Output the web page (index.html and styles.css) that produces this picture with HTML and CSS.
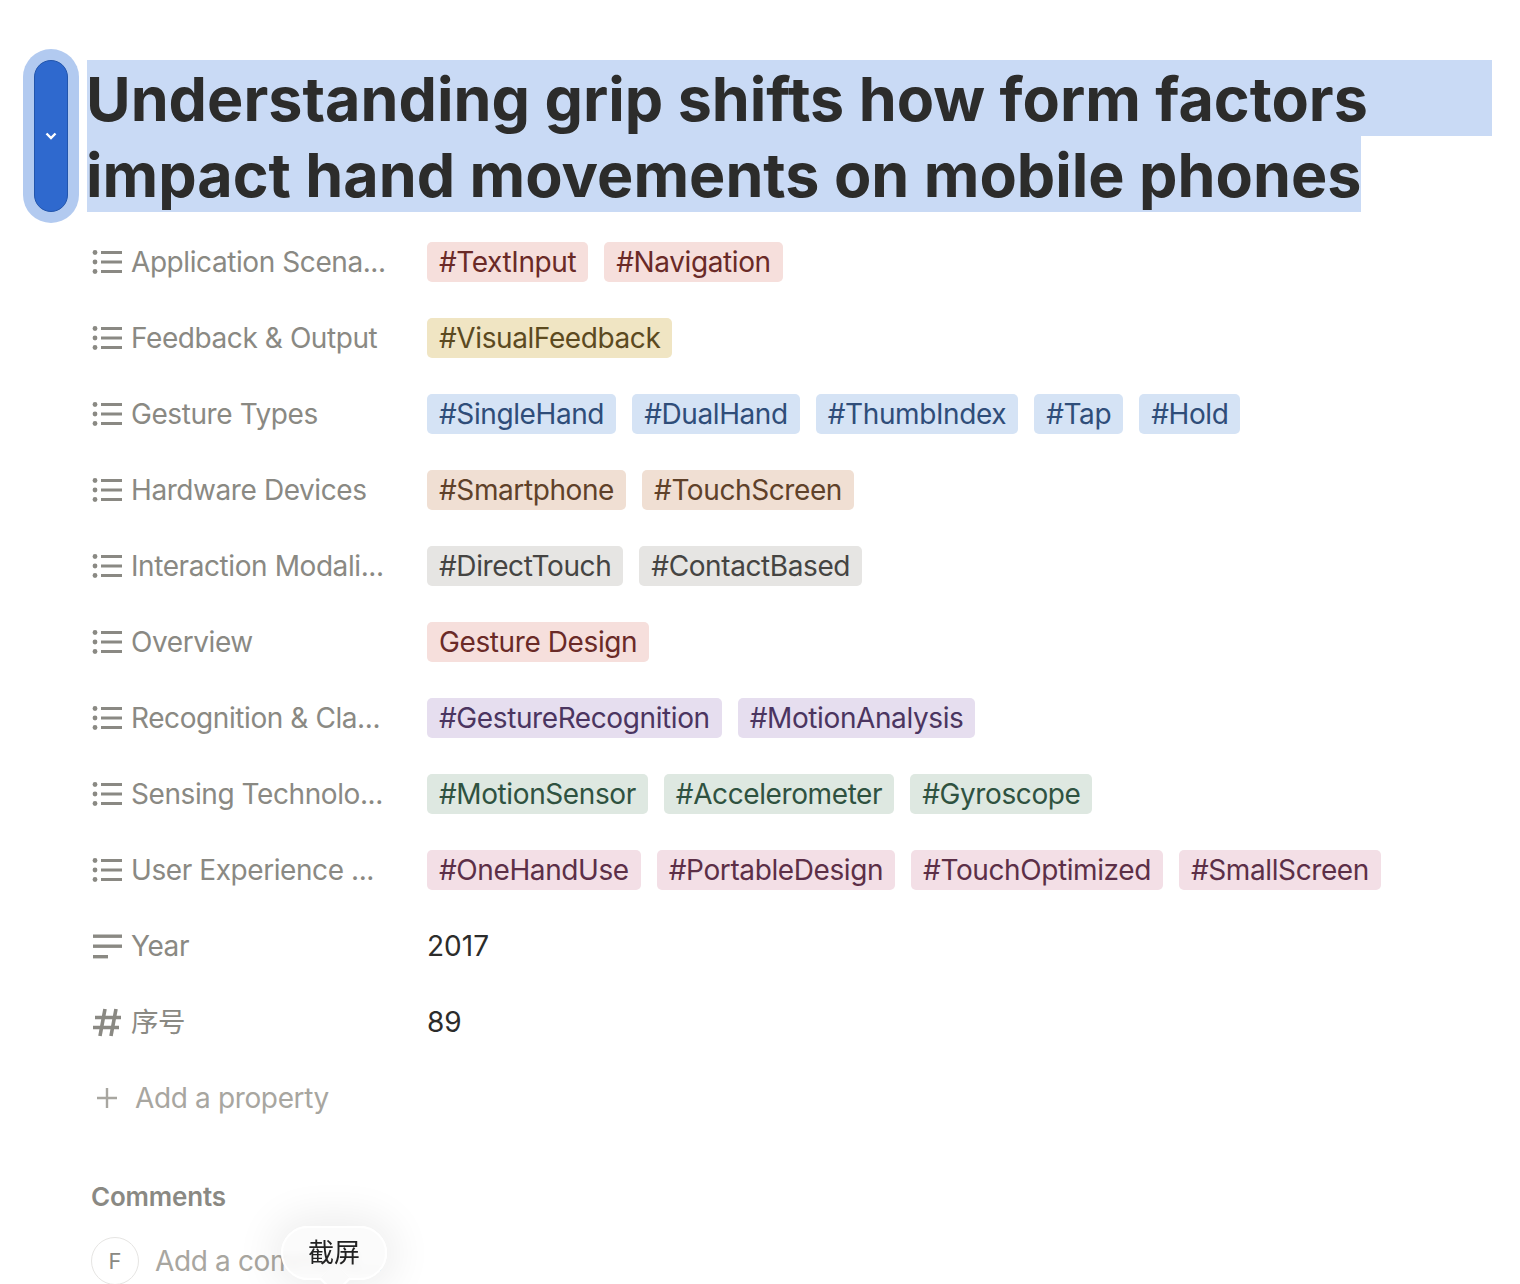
FILE: index.html
```html
<!DOCTYPE html>
<html lang="en">
<head>
  <meta charset="UTF-8">
  <title>Understanding grip shifts</title>
  <link rel="stylesheet" href="styles.css">
</head>
<body>
  <svg class="defs" width="0" height="0">
    <symbol id="list" viewBox="0 0 30 26">
      <circle cx="3" cy="3.500" r="2.400"/><circle cx="3" cy="13" r="2.400"/><circle cx="3" cy="22.500" r="2.400"/>
      <rect x="9" y="2" width="21" height="3"/><rect x="9" y="11.500" width="21" height="3"/><rect x="9" y="21" width="21" height="3"/>
    </symbol>
  </svg>

  <div class="page">
    <div class="handle">
      <div class="handle-bar">
        <svg width="12" height="8" viewBox="0 0 12 8"><path d="M1.500 1.500 6 6l4.500-4.500" fill="none" stroke="#fff" stroke-width="2.400"/></svg>
      </div>
    </div>

    <h1 class="title">
      <span class="line line-full">Understanding grip shifts how form factors</span>
      <span class="line">impact hand movements on mobile phones</span>
    </h1>

    <div class="props">
      <div class="prop">
        <div class="prop-name"><svg class="icon"><use href="#list"/></svg>Application Scena...</div>
        <div class="prop-value"><span class="tag red">#TextInput</span><span class="tag red">#Navigation</span></div>
      </div>
      <div class="prop">
        <div class="prop-name"><svg class="icon"><use href="#list"/></svg>Feedback &amp; Output</div>
        <div class="prop-value"><span class="tag yellow">#VisualFeedback</span></div>
      </div>
      <div class="prop">
        <div class="prop-name"><svg class="icon"><use href="#list"/></svg>Gesture Types</div>
        <div class="prop-value"><span class="tag blue">#SingleHand</span><span class="tag blue">#DualHand</span><span class="tag blue">#ThumbIndex</span><span class="tag blue">#Tap</span><span class="tag blue">#Hold</span></div>
      </div>
      <div class="prop">
        <div class="prop-name"><svg class="icon"><use href="#list"/></svg>Hardware Devices</div>
        <div class="prop-value"><span class="tag brown">#Smartphone</span><span class="tag brown">#TouchScreen</span></div>
      </div>
      <div class="prop">
        <div class="prop-name"><svg class="icon"><use href="#list"/></svg>Interaction Modali...</div>
        <div class="prop-value"><span class="tag gray">#DirectTouch</span><span class="tag gray">#ContactBased</span></div>
      </div>
      <div class="prop">
        <div class="prop-name"><svg class="icon"><use href="#list"/></svg>Overview</div>
        <div class="prop-value"><span class="tag red">Gesture Design</span></div>
      </div>
      <div class="prop">
        <div class="prop-name"><svg class="icon"><use href="#list"/></svg>Recognition &amp; Cla...</div>
        <div class="prop-value"><span class="tag purple">#GestureRecognition</span><span class="tag purple">#MotionAnalysis</span></div>
      </div>
      <div class="prop">
        <div class="prop-name"><svg class="icon"><use href="#list"/></svg>Sensing Technolo...</div>
        <div class="prop-value"><span class="tag green">#MotionSensor</span><span class="tag green">#Accelerometer</span><span class="tag green">#Gyroscope</span></div>
      </div>
      <div class="prop">
        <div class="prop-name"><svg class="icon"><use href="#list"/></svg>User Experience ...</div>
        <div class="prop-value"><span class="tag pink">#OneHandUse</span><span class="tag pink">#PortableDesign</span><span class="tag pink">#TouchOptimized</span><span class="tag pink">#SmallScreen</span></div>
      </div>
      <div class="prop">
        <div class="prop-name">
          <svg class="icon" viewBox="0 0 30 26"><rect x="1" y="1.500" width="29" height="3.400"/><rect x="1" y="11.500" width="29" height="3.400"/><rect x="1" y="22" width="15" height="3.400"/></svg>Year
        </div>
        <div class="prop-value plain">2017</div>
      </div>
      <div class="prop">
        <div class="prop-name">
          <svg class="icon icon-hash" viewBox="0 0 30 30"><path d="M13 2 8 29M24 2l-5 27M3 10.500h26M1 20.500h26" fill="none" stroke="#8a8983" stroke-width="3.600"/></svg><span class="cjk">序号</span>
        </div>
        <div class="prop-value plain">89</div>
      </div>
      <div class="prop add">
        <svg class="plus" width="24" height="24" viewBox="0 0 24 24"><path d="M12 2v20M2 12h20" stroke="#a8a6a0" stroke-width="2.400"/></svg>Add a property
      </div>
    </div>

    <div class="comments">
      <h2>Comments</h2>
      <div class="comment-row">
        <div class="avatar">F</div>
        <div class="comment-input">Add a comment...</div>
      </div>
    </div>
  </div>

  <div class="tooltip">截屏</div>
</body>
</html>
```

FILE: styles.css
```css
html, body {
  margin: 0;
  height: 1284px;
  overflow: hidden;
  background: #fff;
}

body {
  font-family: Inter, "Noto Sans CJK SC", sans-serif;
  color: #2c2c2b;
  position: relative;
}

.defs {
  position: absolute;
}

.page {
  padding: 60px 28px 0 87px;
  position: relative;
}

.handle {
  position: absolute;
  left: 23px;
  top: 49px;
  width: 56px;
  height: 174px;
  box-sizing: border-box;
  padding: 11px;
  background: #b2caf0;
  border-radius: 28px;
}

.handle-bar {
  height: 100%;
  box-sizing: border-box;
  background: #2f69ce;
  border: 1px solid #2255ac;
  border-radius: 17px;
  display: flex;
  align-items: center;
  justify-content: center;
}

.title {
  margin: 0;
  font-size: 61px;
  font-weight: 700;
  line-height: 78px;
  text-indent: -1px;
  white-space: nowrap;
}

.line {
  display: block;
  height: 76px;
  width: fit-content;
  background: #c9daf5;
}

.line-full {
  width: auto;
}

.props {
  margin-top: 12px;
  padding-left: 5px;
}

.prop {
  display: flex;
  align-items: center;
  height: 76px;
}

.prop-name {
  width: 335px;
  flex: none;
  display: flex;
  align-items: center;
  font-size: 28px;
  letter-spacing: -0.42px;
  color: #8a8983;
  white-space: nowrap;
}

.icon {
  width: 30px;
  height: 26px;
  margin-right: 9px;
  fill: #8a8983;
  flex: none;
}

.icon-hash {
  height: 30px;
}

.cjk {
  font-size: 27.5px;
  line-height: 30px;
  margin-top: -1px;
}

.prop-value {
  display: flex;
  gap: 16px;
  font-size: 28px;
  line-height: 40px;
  letter-spacing: -0.4px;
}

.plain {
  color: #2c2c2b;
  letter-spacing: 0;
}

.tag {
  height: 40px;
  padding: 0 12px;
  border-radius: 5px;
  white-space: nowrap;
}

.red { background: #f6dfdc; color: #6a2a27; }
.yellow { background: #f0e5c3; color: #5c4a1f; }
.blue { background: #d5e3f5; color: #2f4d79; }
.brown { background: #f0dfd3; color: #5f4129; }
.gray { background: #e6e5e3; color: #454442; }
.purple { background: #e6deef; color: #4b3560; }
.green { background: #dee8e1; color: #2f5240; }
.pink { background: #f3dfe6; color: #5c2f47; }

.add {
  font-size: 28px;
  letter-spacing: -0.36px;
  color: #a8a6a0;
}

.plus {
  margin: 0 16px 0 3px;
}

.comments {
  margin-top: 43px;
  padding-left: 4px;
}

.comments h2 {
  margin: 0;
  font-size: 26px;
  font-weight: 600;
  letter-spacing: -0.2px;
  line-height: 36px;
  color: #8a8983;
}

.comment-row {
  display: flex;
  align-items: center;
  gap: 16px;
  margin-top: 22px;
}

.avatar {
  width: 46px;
  height: 46px;
  border: 1px solid #e6e5e3;
  border-radius: 50%;
  display: flex;
  align-items: center;
  justify-content: center;
  font-size: 22px;
  color: #8a8983;
}

.comment-input {
  font-size: 28px;
  letter-spacing: -0.36px;
  color: #a8a6a0;
  white-space: nowrap;
}

.tooltip {
  position: absolute;
  left: 281px;
  top: 1226px;
  width: 106px;
  height: 54px;
  box-sizing: border-box;
  border: 2px solid #fff;
  border-radius: 27px;
  background: rgba(250, 250, 250, 0.88);
  backdrop-filter: blur(4px);
  box-shadow: 0 0 40px 10px rgba(0, 0, 0, 0.07);
  text-align: center;
  line-height: 50px;
  font-size: 26px;
  color: #222;
}

.tooltip::after {
  content: "";
  position: absolute;
  left: 41px;
  top: 40px;
  width: 20px;
  height: 20px;
  background: #fafafa;
  border-right: 2px solid #fff;
  border-bottom: 2px solid #fff;
  transform: rotate(45deg);
}
```
